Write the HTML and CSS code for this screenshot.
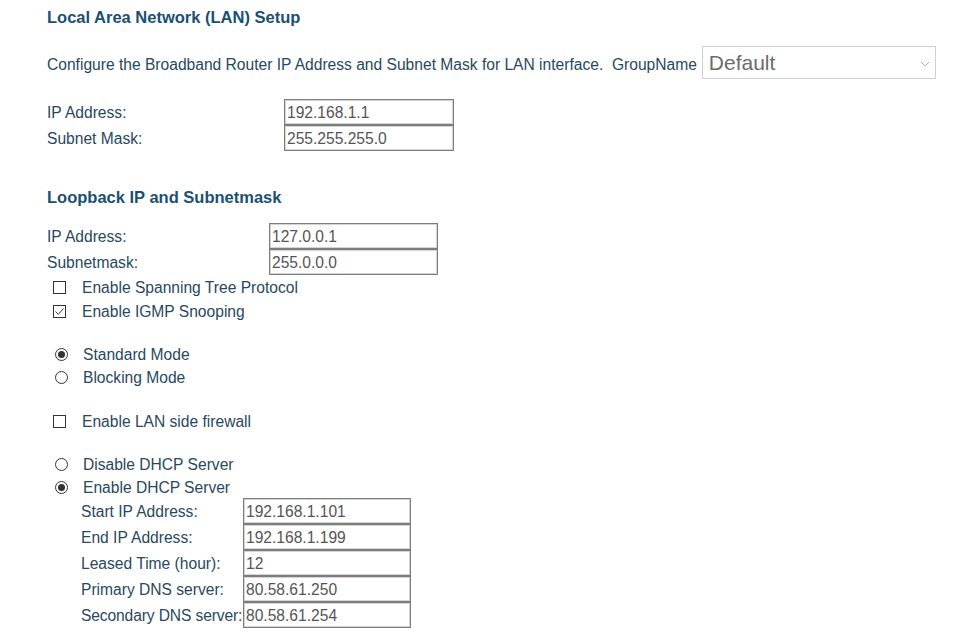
FILE: index.html
```html
<!DOCTYPE html>
<html>
<head>
<meta charset="utf-8">
<title>LAN Setup</title>
<link rel="stylesheet" href="styles.css">
</head>
<body>
<div class="page">
  <h1 class="title">Local Area Network (LAN) Setup</h1>

  <div class="intro">
    <span class="intro-text">Configure the Broadband Router IP Address and Subnet Mask for LAN interface.&nbsp;&nbsp;GroupName</span>
    <div class="select"><span class="select-text">Default</span>
      <svg class="chev" width="10" height="6" viewBox="0 0 10 6"><path d="M1 1 L5 5 L9 1" fill="none" stroke="#b0b0b0" stroke-width="1"/></svg>
    </div>
  </div>

  <div class="form form-lan">
    <label>IP Address:</label><div class="field">192.168.1.1</div>
    <label>Subnet Mask:</label><div class="field">255.255.255.0</div>
  </div>

  <h2 class="title title2">Loopback IP and Subnetmask</h2>

  <div class="form form-loop">
    <label>IP Address:</label><div class="field">127.0.0.1</div>
    <label>Subnetmask:</label><div class="field">255.0.0.0</div>
  </div>

  <div class="checks">
    <div class="opt"><span class="box"></span><span>Enable Spanning Tree Protocol</span></div>
    <div class="opt"><span class="box checked"><svg width="11" height="11" viewBox="0 0 11 11"><path d="M1.5 5.5 L4.3 8.3 L9.5 2.5" fill="none" stroke="#333" stroke-width="1"/></svg></span><span>Enable IGMP Snooping</span></div>
  </div>

  <div class="radios">
    <div class="opt ropt"><span class="radio on"></span><span>Standard Mode</span></div>
    <div class="opt ropt"><span class="radio"></span><span>Blocking Mode</span></div>
  </div>

  <div class="checks single">
    <div class="opt"><span class="box"></span><span>Enable LAN side firewall</span></div>
  </div>

  <div class="radios">
    <div class="opt ropt"><span class="radio"></span><span>Disable DHCP Server</span></div>
    <div class="opt ropt"><span class="radio on"></span><span>Enable DHCP Server</span></div>
  </div>

  <div class="form form-dhcp">
    <label>Start IP Address:</label><div class="field">192.168.1.101</div>
    <label>End IP Address:</label><div class="field">192.168.1.199</div>
    <label>Leased Time (hour):</label><div class="field">12</div>
    <label>Primary DNS server:</label><div class="field">80.58.61.250</div>
    <label class="tight">Secondary DNS server:</label><div class="field">80.58.61.254</div>
  </div>
</div>
</body>
</html>
```

FILE: styles.css
```css
html, body {
  margin: 0;
  padding: 0;
  background: #ffffff;
}

body {
  font-family: "Liberation Sans", Arial, sans-serif;
  font-size: 15.6px;
  color: #27495f;
}

.page {
  padding: 7px 0 0 47px;
}

.title {
  margin: 0;
  font-size: 16.5px;
  line-height: 20px;
  font-weight: bold;
  color: #1b5074;
}

.intro {
  display: flex;
  align-items: center;
  margin-top: 19px;
  height: 33px;
  white-space: nowrap;
}

.intro-text {
  margin-right: 5px;
  padding-top: 5px;
}

.select {
  position: relative;
  width: 232px;
  height: 31px;
  border: 1px solid #cfcfcf;
  display: flex;
  align-items: center;
}

.select-text {
  padding-left: 6px;
  padding-top: 1px;
  font-size: 21px;
  color: #6b6b6b;
}

.chev {
  position: absolute;
  right: 5px;
  top: 14px;
}

.form {
  display: grid;
  grid-auto-rows: 26px;
  align-items: center;
}

.form label {
  line-height: 26px;
  padding-top: 1px;
  white-space: nowrap;
}

.form label.tight {
  letter-spacing: -0.12px;
}

.form-lan {
  margin-top: 20px;
  grid-template-columns: 237px 170px;
}

.form-loop {
  margin-top: 16px;
  grid-template-columns: 222px 169px;
}

.form-dhcp {
  margin-left: 34px;
  margin-top: -1px;
  grid-template-columns: 162px 168px;
}

.field {
  box-sizing: border-box;
  height: 26px;
  border: 1px solid #7d7d7d;
  box-shadow: inset 0 0 0 1px #d4d4d4;
  padding-left: 2px;
  line-height: 25px;
  color: #555555;
  white-space: nowrap;
}

.title2 {
  margin-top: 36px;
}

.checks .opt {
  height: 24px;
}

.opt {
  display: flex;
  align-items: center;
}

.opt > span:last-child {
  padding-top: 1px;
}

.ropt {
  height: 23px;
}

.box {
  box-sizing: border-box;
  width: 13px;
  height: 13px;
  border: 1px solid #333333;
  margin-left: 6px;
  margin-right: 16px;
  display: flex;
  align-items: center;
  justify-content: center;
}

.radio {
  box-sizing: border-box;
  width: 13px;
  height: 13px;
  border: 1px solid #333333;
  border-radius: 50%;
  margin-left: 8px;
  margin-right: 15px;
  display: flex;
  align-items: center;
  justify-content: center;
}

.radio.on::after {
  content: "";
  width: 7px;
  height: 7px;
  border-radius: 50%;
  background: #333333;
}

.radios {
  margin-top: 20px;
}

.checks.single {
  margin-top: 20px;
}
```
